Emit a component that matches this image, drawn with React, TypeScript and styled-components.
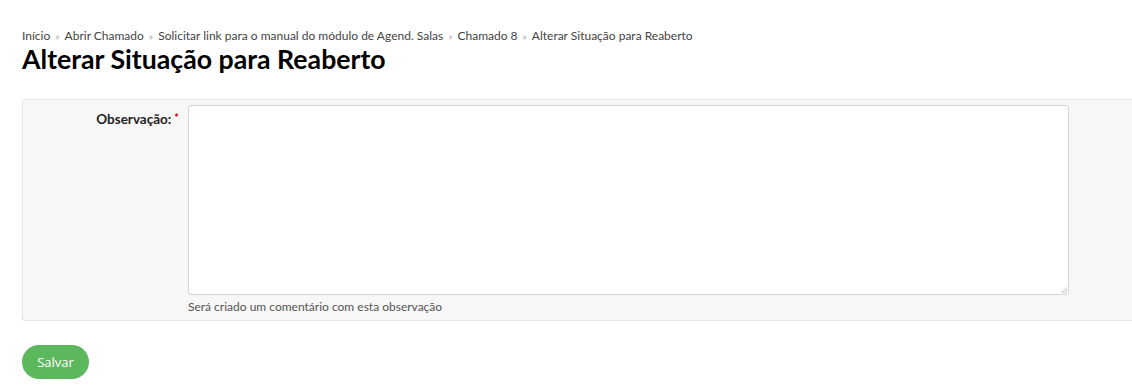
import React from "react";
import styled, { createGlobalStyle } from "styled-components";

const Global = createGlobalStyle`
  html, body { margin: 0; padding: 0; background: #fff; overflow: hidden; }
  body { font-family: Lato, "Open Sans", sans-serif; color: #333; }
`;

const Page = styled.div`
  padding: 28px 0 0 22px;
  width: 1130px;
`;

const Breadcrumbs = styled.nav`
  display: flex;
  align-items: center;
  font-size: 12px;
  line-height: 16px;
  color: #444;
`;

const Sep = styled.span`
  color: #aaa;
  font-size: 10px;
  margin: 0 5px;
`;

const Title = styled.h1`
  margin: 0;
  font-size: 26.7px;
  line-height: 30px;
  font-weight: 700;
  color: #000;
`;

const Panel = styled.div`
  margin-top: 25px;
  background: #f7f7f7;
  border: 1px solid #e6e6e6;
  border-right: none;
  border-radius: 3px 0 0 3px;
  padding: 5px 0 6px 0;
  display: grid;
  grid-template-columns: 165px 881px;
`;

const Label = styled.label`
  font-size: 13.5px;
  line-height: 16px;
  font-weight: 700;
  color: #222;
  text-align: right;
  padding-top: 5px;
  padding-right: 9px;
`;

const Req = styled.span`
  color: #c00;
  margin-left: 3px;
  font-size: 11px;
  vertical-align: 2px;
`;

const Field = styled.div`
  display: flex;
  flex-direction: column;
`;

const AreaWrap = styled.div`
  position: relative;
  width: 881px;
  height: 190px;
`;

const TextArea = styled.textarea`
  display: block;
  box-sizing: border-box;
  width: 881px;
  height: 190px;
  border: 1px solid #d4d4d4;
  border-radius: 3px;
  background: #fff;
  margin: 0;
  resize: none;
  font-family: inherit;
`;

const Grip = styled.span`
  position: absolute;
  right: 2px;
  bottom: 2px;
  width: 0;
  height: 0;
  border-left: 7px solid transparent;
  border-bottom: 7px solid #e2e2e2;
  pointer-events: none;
`;

const Help = styled.div`
  font-size: 12px;
  color: #555;
  margin-top: 5px;
  line-height: 14px;
`;

const Button = styled.button`
  margin-top: 24px;
  background: #5cb85c;
  color: #fff;
  border: none;
  border-radius: 17px;
  height: 34px;
  width: 67px;
  font-family: "Open Sans", sans-serif;
  font-size: 13px;
  padding: 0;
`;

const crumbs = [
  "Início",
  "Abrir Chamado",
  "Solicitar link para o manual do módulo de Agend. Salas",
  "Chamado 8",
  "Alterar Situação para Reaberto",
];

export default function App() {
  return (
    <Page>
      <Global />
      <Breadcrumbs>
        {crumbs.map((c, i) => (
          <React.Fragment key={c}>
            {i > 0 && <Sep>»</Sep>}
            <span>{c}</span>
          </React.Fragment>
        ))}
      </Breadcrumbs>
      <Title>Alterar Situação para Reaberto</Title>
      <Panel>
        <Label>
          Observação:<Req>*</Req>
        </Label>
        <Field>
          <AreaWrap>
            <TextArea />
            <Grip />
          </AreaWrap>
          <Help>Será criado um comentário com esta observação</Help>
        </Field>
      </Panel>
      <Button>Salvar</Button>
    </Page>
  );
}
